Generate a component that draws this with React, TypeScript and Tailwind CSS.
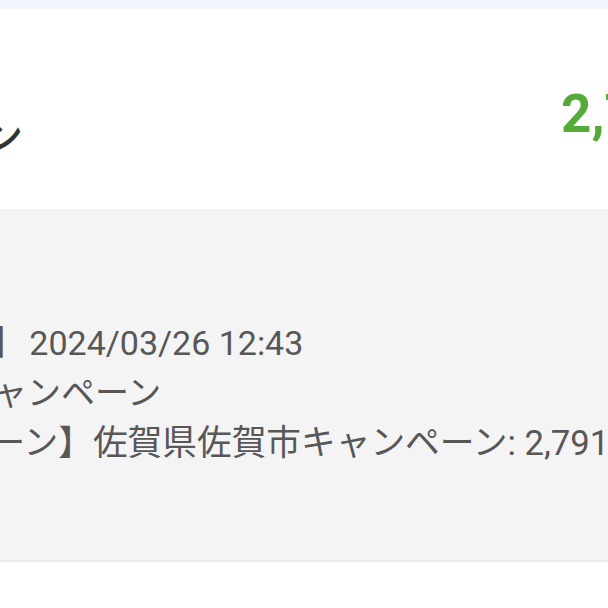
const font = "font-['Roboto','Noto_Sans_CJK_JP',sans-serif]";

export default function App() {
  return (
    <div className={`h-[608px] w-[608px] overflow-hidden bg-white ${font}`}>
      <div className="h-[9px] bg-[#f2f5fb]" />

      {/* campaign header */}
      <div className="flex h-[200px] items-start">
        <p className="-ml-[455px] mt-[109px] shrink-0 whitespace-nowrap text-[40px] font-medium leading-none text-[#333333]">
          佐賀県佐賀市キャンペーン
        </p>
        <p className="ml-[538px] mt-[79px] shrink-0 whitespace-nowrap text-[53px] font-bold leading-none text-[#55ab37]">
          2,791円
        </p>
      </div>

      {/* history entry */}
      <div className="h-[353px] border-b-2 border-[#ebebeb] bg-[#f4f4f4] pt-[109px]">
        <div className="-ml-[381px] flex flex-col text-[#575757]">
          <p className="whitespace-nowrap text-[34px] leading-[50px]">
            【キャンペーン獲得日時】<span className="ml-[4px]">2024/03/26 12:43</span>
          </p>
          <p className="whitespace-nowrap text-[34px] leading-[50px]">
            獲得元：佐賀県佐賀市キャンペーン
          </p>
          <p className="-ml-[10px] whitespace-nowrap text-[34.7px] leading-[50px]">
            【佐賀県佐賀市キャンペーン】佐賀県佐賀市キャンペーン: 2,791円
          </p>
        </div>
      </div>
    </div>
  );
}
